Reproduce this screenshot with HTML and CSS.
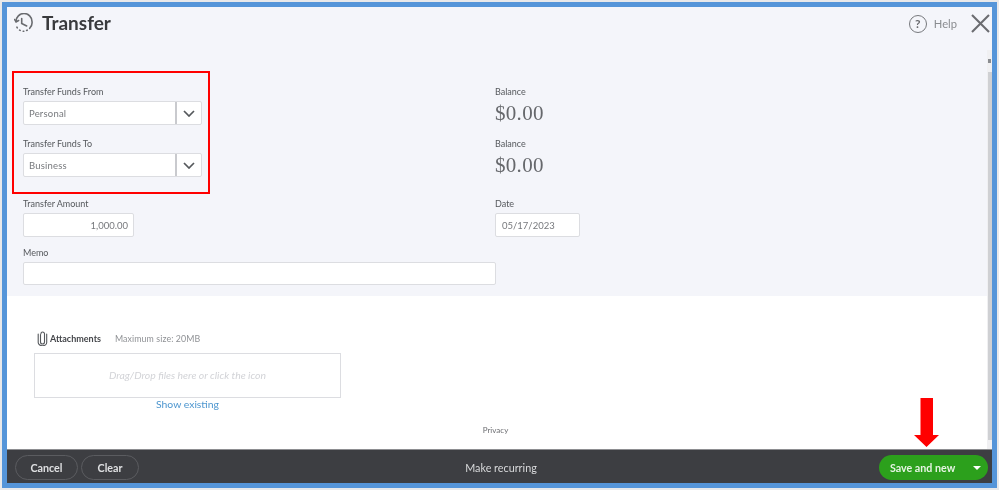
FILE: index.html
```html
<!DOCTYPE html>
<html lang="en">
<head>
<meta charset="utf-8">
<title>Transfer</title>
<link rel="stylesheet" href="styles.css">
</head>
<body>
<div class="frame">
  <header class="head">
    <div class="title-group">
      <svg class="clock" viewBox="0 0 20 20" width="20" height="20" fill="none" stroke="#696b6f" stroke-width="1.600" stroke-linecap="round">
        <path d="M2 8.500A8 8 0 0 1 18 8.500c.4 2.800-.6 5-2.300 6.800"/>
        <path d="M13.200 17.200l-.6.3M9.800 18.200h-.6M6.200 17.400l-.6-.3M3.300 14.800l-.4-.7"/>
        <path d="M.6 6.500l1.500 2.400 2.500-1.400"/>
        <path d="M7.700 5.500v5l5 2.500"/>
      </svg>
      <h1 class="title">Transfer</h1>
    </div>
    <div class="help-group">
      <span class="help-circle">?</span>
      <span class="help-text">Help</span>
      <svg class="close" viewBox="0 0 19 19" width="19" height="19" stroke="#6b6c70" stroke-width="2.100" fill="none"><path d="M1 1l17 17M18 1L1 18"/></svg>
    </div>
  </header>

  <section class="form-area">
    <div class="cols">
      <div class="col-left">
        <div class="red-box">
          <label class="label">Transfer Funds From</label>
          <div class="select"><span class="select-value">Personal</span><span class="select-btn"><svg viewBox="0 0 12 7" width="12" height="7" fill="none" stroke="#55585c" stroke-width="1.700"><path d="M1 1l5 5 5-5"/></svg></span></div>
          <label class="label label-next">Transfer Funds To</label>
          <div class="select"><span class="select-value">Business</span><span class="select-btn"><svg viewBox="0 0 12 7" width="12" height="7" fill="none" stroke="#55585c" stroke-width="1.700"><path d="M1 1l5 5 5-5"/></svg></span></div>
        </div>
        <div class="amount-field">
          <label class="label">Transfer Amount</label>
          <div class="input input-amount">1,000.00</div>
        </div>
      </div>
      <div class="col-right">
        <div class="label">Balance</div>
        <div class="money">$0.00</div>
        <div class="label label-next">Balance</div>
        <div class="money">$0.00</div>
        <label class="label label-date">Date</label>
        <div class="input input-date">05/17/2023</div>
      </div>
    </div>
    <div class="memo-field">
      <label class="label">Memo</label>
      <div class="input input-memo"></div>
    </div>
  </section>

  <section class="attach-area">
    <div class="attach-col">
      <div class="attach-head">
        <svg class="clip" viewBox="0 0 11 15" width="11" height="15" fill="none" stroke="#55585c" stroke-width="1.100" stroke-linecap="round"><path d="M3.500 3.500v7.500a2 2 0 0 0 4 0V2.800a1.800 1.800 0 0 0-3.600 0"/><path d="M1.200 3v8.500a4.200 3.200 0 0 0 8.500 0V3"/></svg>
        <span class="attach-title">Attachments</span>
        <span class="attach-max">Maximum size: 20MB</span>
      </div>
      <div class="drop">Drag/Drop files here or click the icon</div>
      <a class="show-existing">Show existing</a>
    </div>
    <div class="privacy">Privacy</div>
  </section>

  <footer class="foot">
    <div class="foot-left">
      <button class="pill">Cancel</button>
      <button class="pill pill-clear">Clear</button>
    </div>
    <div class="recurring">Make recurring</div>
    <button class="save"><span>Save and new</span><i class="caret"></i></button>
  </footer>

  <div class="scrollbar"><i class="arrow"></i><i class="thumb"></i></div>
</div>
<svg class="red-arrow" viewBox="0 0 25 49" width="25" height="49"><path fill="#f00" d="M6.500 0h12.500v37h6L12.500 49 0 37h6.500z"/></svg>
</body>
</html>
```
FILE: styles.css
```css
* { box-sizing: border-box; }
html, body { margin: 0; padding: 0; }
body {
  width: 999px;
  height: 490px;
  background: #e9e9ea;
  font-family: "Lato", "Liberation Sans", sans-serif;
  overflow: hidden;
  position: relative;
}
.frame {
  position: relative;
  width: 995px;
  height: 486px;
  margin: 2px;
  border: 5px solid #5595d9;
  background: #fff;
  display: flex;
  flex-direction: column;
  filter: blur(0.45px);
}
.head {
  height: 64px;
  background: #f4f5fa;
  display: flex;
  justify-content: space-between;
  align-items: flex-start;
  padding: 6px 2px 0 7px;
}
.title-group { display: flex; align-items: center; gap: 8px; }
.title { margin: 0; font-size: 19px; line-height: 20px; font-weight: 700; color: #393a3d; }
.help-group { display: flex; align-items: center; color: #8a8c90; margin-top: 1px; }
.help-circle {
  width: 18px; height: 18px;
  border: 1.5px solid #77797d;
  border-radius: 50%;
  font-size: 12px; line-height: 15px;
  font-weight: 700;
  text-align: center;
  color: #6b6c70;
}
.help-text { font-size: 11.200px; margin: 0 14px 0 7px; }
.form-area {
  background: #f4f5fa;
  height: 225px;
  padding-left: 5px;
}
.cols { display: flex; }
.col-left { width: 483px; }
.red-box {
  width: 198px;
  height: 123px;
  border: 2px solid #f00;
  padding: 11px 6px 0 9px;
}
.label {
  display: block;
  height: 14px;
  font-size: 9px;
  line-height: 15px;
  color: #55585c;
  margin-bottom: 3px;
}
.label-next { margin-top: 11px; }
.select {
  display: flex;
  height: 24px;
  width: 179px;
  background: #fff;
  border: 1px solid #dcdde1;
  border-radius: 2px;
}
.select-value { flex: 1; font-size: 9.500px; line-height: 24px; padding-left: 5px; color: #77797d; letter-spacing: .2px; border-right: 2px solid #c9cace; }
.select-btn { width: 24px; display: flex; align-items: center; justify-content: center; }
.amount-field { margin: 2px 0 0 11px; }
.input {
  height: 24px;
  background: #fff;
  border: 1px solid #dcdde1;
  border-radius: 2px;
  font-size: 9.500px;
  line-height: 23px;
  color: #77797d;
}
.input-amount { width: 111px; text-align: right; padding-right: 5px; }
.col-right { padding-top: 13px; }
.money {
  height: 24px;
  font-family: "Liberation Serif", serif;
  font-size: 21px;
  line-height: 25px;
  color: #66686c;
  letter-spacing: .3px;
}
.label-date { margin-top: 19px; }
.input-date { width: 85px; padding-left: 6px; }
.memo-field { margin: 8px 0 0 11px; }
.input-memo { width: 473px; height: 23px; }
.attach-area {
  flex: 1;
  background: #fff;
  padding-top: 35px;
}
.attach-col { width: 307px; margin-left: 27px; }
.attach-head { display: flex; align-items: center; height: 15px; margin-left: 3px; margin-bottom: 7px; }
.attach-title { font-size: 9px; font-weight: 700; color: #45474b; margin-left: 2px; }
.attach-max { font-size: 8.800px; color: #8f9195; margin-left: 14px; letter-spacing: .1px; }
.drop {
  height: 45px;
  border: 1px solid #dcdde1;
  font-size: 10.400px;
  font-style: italic;
  line-height: 43px;
  text-align: center;
  color: #d2d3d7;
}
.show-existing {
  display: block;
  text-align: center;
  font-size: 10.400px;
  line-height: 13px;
  color: #4d96cf;
}
.privacy { font-size: 8px; line-height: 12px; color: #6b6c70; text-align: center; margin-top: 13px; padding-right: 8px; }
.foot {
  height: 34px;
  background: #3d3e42;
  border-top: 1px solid #8d8e91;
  display: flex;
  align-items: center;
  padding: 2px 4px 0 8px;
}
.foot-left { display: flex; gap: 3px; }
.pill {
  width: 63px;
  height: 25px;
  border: 1px solid #5b5c60;
  border-radius: 13px;
  background: transparent;
  font-family: inherit;
  font-size: 10.700px;
  font-weight: 700;
  color: #dfe0e2;
  padding: 0;
}
.pill-clear { width: 58px; }
.recurring { flex: 1; margin-right: 16px; text-align: center; font-size: 10.800px; color: #d8d9db; }
.save {
  width: 109px;
  height: 25px;
  border: 0;
  border-radius: 13px;
  background: #2ca01c;
  color: #e6f4e3;
  font-family: inherit;
  font-size: 10.700px;
  font-weight: 700;
  padding: 0 7px 0 11px;
  display: flex;
  align-items: center;
  justify-content: space-between;
}
.caret { width: 0; height: 0; border-left: 4px solid transparent; border-right: 4px solid transparent; border-top: 4px solid #fff; }
.scrollbar {
  position: absolute;
  right: 0;
  top: 43px;
  width: 5px;
  height: 399px;
  background: #f0f0f2;
}
.arrow { position: absolute; left: 1px; top: 9px; width: 3px; height: 4px; background: #8a8c90; }
.thumb { position: absolute; left: 1px; right: 0; top: 22px; height: 368px; background: #cfd0d3; }
.red-arrow { position: absolute; left: 914px; top: 398px; }
```
